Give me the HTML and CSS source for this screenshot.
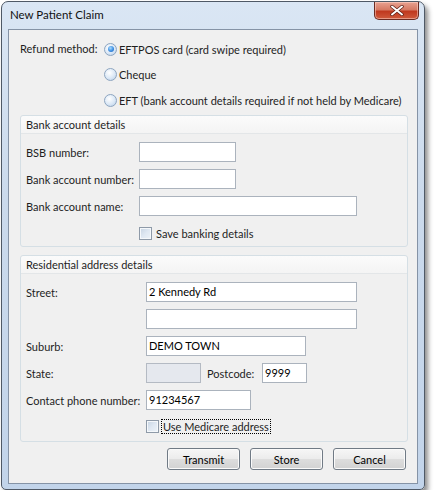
FILE: index.html
```html
<!DOCTYPE html>
<html>
<head>
<meta charset="utf-8">
<link rel="stylesheet" href="styles.css">
</head>
<body>
<div class="window">
  <div class="titlebar">
    <span class="title">New Patient Claim</span>
    <div class="close">
      <svg width="14" height="11" viewBox="0 0 14 11"><path d="M2 1.5 L12 9.5 M12 1.5 L2 9.5" stroke="#5a1d14" stroke-width="3.4" stroke-linecap="round"/><path d="M2 1.5 L12 9.5 M12 1.5 L2 9.5" stroke="#ffffff" stroke-width="2" stroke-linecap="round"/></svg>
    </div>
  </div>
  <div class="client">
    <div class="refund">
      <div class="refund-label">Refund method:</div>
      <div class="options">
        <div class="opt"><span class="radio checked"></span><span>EFTPOS card (card swipe required)</span></div>
        <div class="opt"><span class="radio"></span><span>Cheque</span></div>
        <div class="opt"><span class="radio"></span><span>EFT (bank account details required if not held by Medicare)</span></div>
      </div>
    </div>

    <div class="group bank">
      <div class="group-head">Bank account details</div>
      <div class="group-body">
        <div class="row"><span class="lbl">BSB number:</span><span class="input w96"></span></div>
        <div class="row"><span class="lbl">Bank account number:</span><span class="input w96"></span></div>
        <div class="row"><span class="lbl">Bank account name:</span><span class="input w217"></span></div>
        <div class="row check-row"><span class="lbl"></span><span class="check"></span><span class="check-text">Save banking details</span></div>
      </div>
    </div>

    <div class="group addr">
      <div class="group-head">Residential address details</div>
      <div class="group-body">
        <div class="row"><span class="lbl">Street:</span><span class="input w210">2 Kennedy Rd</span></div>
        <div class="row"><span class="lbl"></span><span class="input w210"></span></div>
        <div class="row"><span class="lbl">Suburb:</span><span class="input w159">DEMO TOWN</span></div>
        <div class="row"><span class="lbl">State:</span><span class="input w54 disabled"></span><span class="lbl2">Postcode:</span><span class="input w44">9999</span></div>
        <div class="row"><span class="lbl">Contact phone number:</span><span class="input w105">91234567</span></div>
        <div class="row check-row"><span class="lbl"></span><span class="check"></span><span class="check-text focus">Use Medicare address</span></div>
      </div>
    </div>

    <div class="buttons">
      <span class="btn">Transmit</span>
      <span class="btn">Store</span>
      <span class="btn">Cancel</span>
    </div>
  </div>
</div>
</body>
</html>
```

FILE: styles.css
```css
html, body {
  margin: 0;
  padding: 0;
  background: #ffffff;
}
body {
  font-family: "Lato", "Liberation Sans", sans-serif;
  font-size: 11px;
  color: #1e1e1e;
  white-space: nowrap;
}
.window {
  margin: 1px 0 0 1px;
  width: 424px;
  height: 489px;
  border: 1px solid #4f5966;
  border-radius: 7px 7px 5px 5px;
  background: linear-gradient(180deg, #dae6f4 0%, #cbdaec 40%, #c2d4ea 100%);
  box-shadow: 3px 4px 5px rgba(0,0,0,0.45);
  box-sizing: border-box;
  padding: 0 6px 0 6px;
  display: flex;
  flex-direction: column;
}
.titlebar {
  height: 27px;
  display: flex;
  justify-content: space-between;
  align-items: flex-start;
  flex-shrink: 0;
}
.title {
  margin-top: 6px;
  margin-left: 2px;
  font-size: 11.5px;
  color: #111;
}
.close {
  width: 45px;
  height: 18px;
  margin-right: -1px;
  border: 1px solid #6b2b22;
  border-top: none;
  border-radius: 0 0 5px 5px;
  background: linear-gradient(180deg, #e8a291 0%, #d67a64 45%, #c0391f 55%, #cf5a3c 100%);
  box-shadow: inset 0 0 0 1px rgba(255,220,210,0.5);
  display: flex;
  align-items: center;
  justify-content: center;
  box-sizing: border-box;
}
.client {
  height: 455px;
  border: 1px solid #8593a6;
  background: #f0f0f0;
  box-sizing: border-box;
  padding: 9px 10px 0 11px;
  display: flex;
  flex-direction: column;
}
.refund {
  display: flex;
  height: 76px;
}
.refund-label {
  width: 84px;
  line-height: 20px;
}
.options {
  display: flex;
  flex-direction: column;
  gap: 5.5px;
}
.opt {
  display: flex;
  align-items: center;
  height: 20px;
  gap: 2px;
}
.radio {
  width: 11px;
  height: 11px;
  border: 1px solid #8da5c0;
  border-radius: 50%;
  background: radial-gradient(circle at 40% 35%, #ffffff 0%, #dbe8f6 55%, #b5cbe4 100%);
  box-sizing: content-box;
  display: inline-block;
  position: relative;
}
.radio.checked::after {
  content: "";
  position: absolute;
  left: 2.5px;
  top: 2.5px;
  width: 6px;
  height: 6px;
  border-radius: 50%;
  background: radial-gradient(circle at 40% 35%, #a9dcff 0%, #3d8ee2 55%, #1c5fb4 100%);
}
.group {
  width: 388px;
  border: 1px solid #d5dfe5;
  border-radius: 3px;
  box-sizing: border-box;
  background: #f0f0f0;
}
.bank {
  height: 132px;
}
.addr {
  margin-top: 8px;
  height: 187px;
}
.group-head {
  height: 18px;
  line-height: 17px;
  padding-left: 5px;
  background: linear-gradient(180deg, #fbfbfb 0%, #f4f4f4 100%);
  border-bottom: 1px solid #e3e6e8;
  border-radius: 3px 3px 0 0;
  box-sizing: border-box;
}
.group-body {
  padding: 8px 0 0 5px;
  display: flex;
  flex-direction: column;
  gap: 7px;
}
.row {
  display: flex;
  align-items: center;
  height: 20px;
}
.bank .lbl { width: 113px; flex-shrink: 0; }
.addr .lbl { width: 120px; flex-shrink: 0; }
.input {
  height: 20px;
  border: 1px solid #abb3bd;
  background: #ffffff;
  box-sizing: border-box;
  line-height: 18px;
  padding-left: 2px;
  color: #000;
  flex-shrink: 0;
}
.input.disabled {
  background: #e5e8ee;
  border-color: #b4bac3;
}
.w96 { width: 97px; }
.w217 { width: 218px; }
.w210 { width: 211px; }
.w159 { width: 160px; }
.w54 { width: 55px; }
.w44 { width: 45px; }
.w105 { width: 105px; }
.lbl2 {
  margin-left: 6px;
  width: 55px;
  flex-shrink: 0;
}
.check-row {
  height: 14px;
  margin-top: 3px;
}
.check {
  width: 11px;
  height: 11px;
  border: 1px solid #8e9aa8;
  background: linear-gradient(135deg, #c6d3e2 0%, #dfe8f2 50%, #eef3f8 100%);
  box-shadow: inset 0 0 0 1px #f5f8fb;
  display: inline-block;
  box-sizing: content-box;
}
.check-text {
  margin-left: 2px;
  padding: 0 1px;
  line-height: 13px;
  border: 1px solid transparent;
}
.check-text.focus {
  border: 1px dotted #000;
}
.addr .check-row { margin-top: 2px; }
.buttons {
  display: flex;
  justify-content: flex-end;
  gap: 10px;
  margin-top: 6px;
  padding-right: 1px;
}
.btn {
  width: 73px;
  height: 22px;
  border: 1px solid #707a85;
  border-radius: 3px;
  box-sizing: border-box;
  background: linear-gradient(180deg, #f6f6f6 0%, #ececec 48%, #dddddd 52%, #d2d2d2 100%);
  box-shadow: inset 0 0 0 1px #fafafa;
  display: flex;
  align-items: center;
  justify-content: center;
  color: #000;
}
```
